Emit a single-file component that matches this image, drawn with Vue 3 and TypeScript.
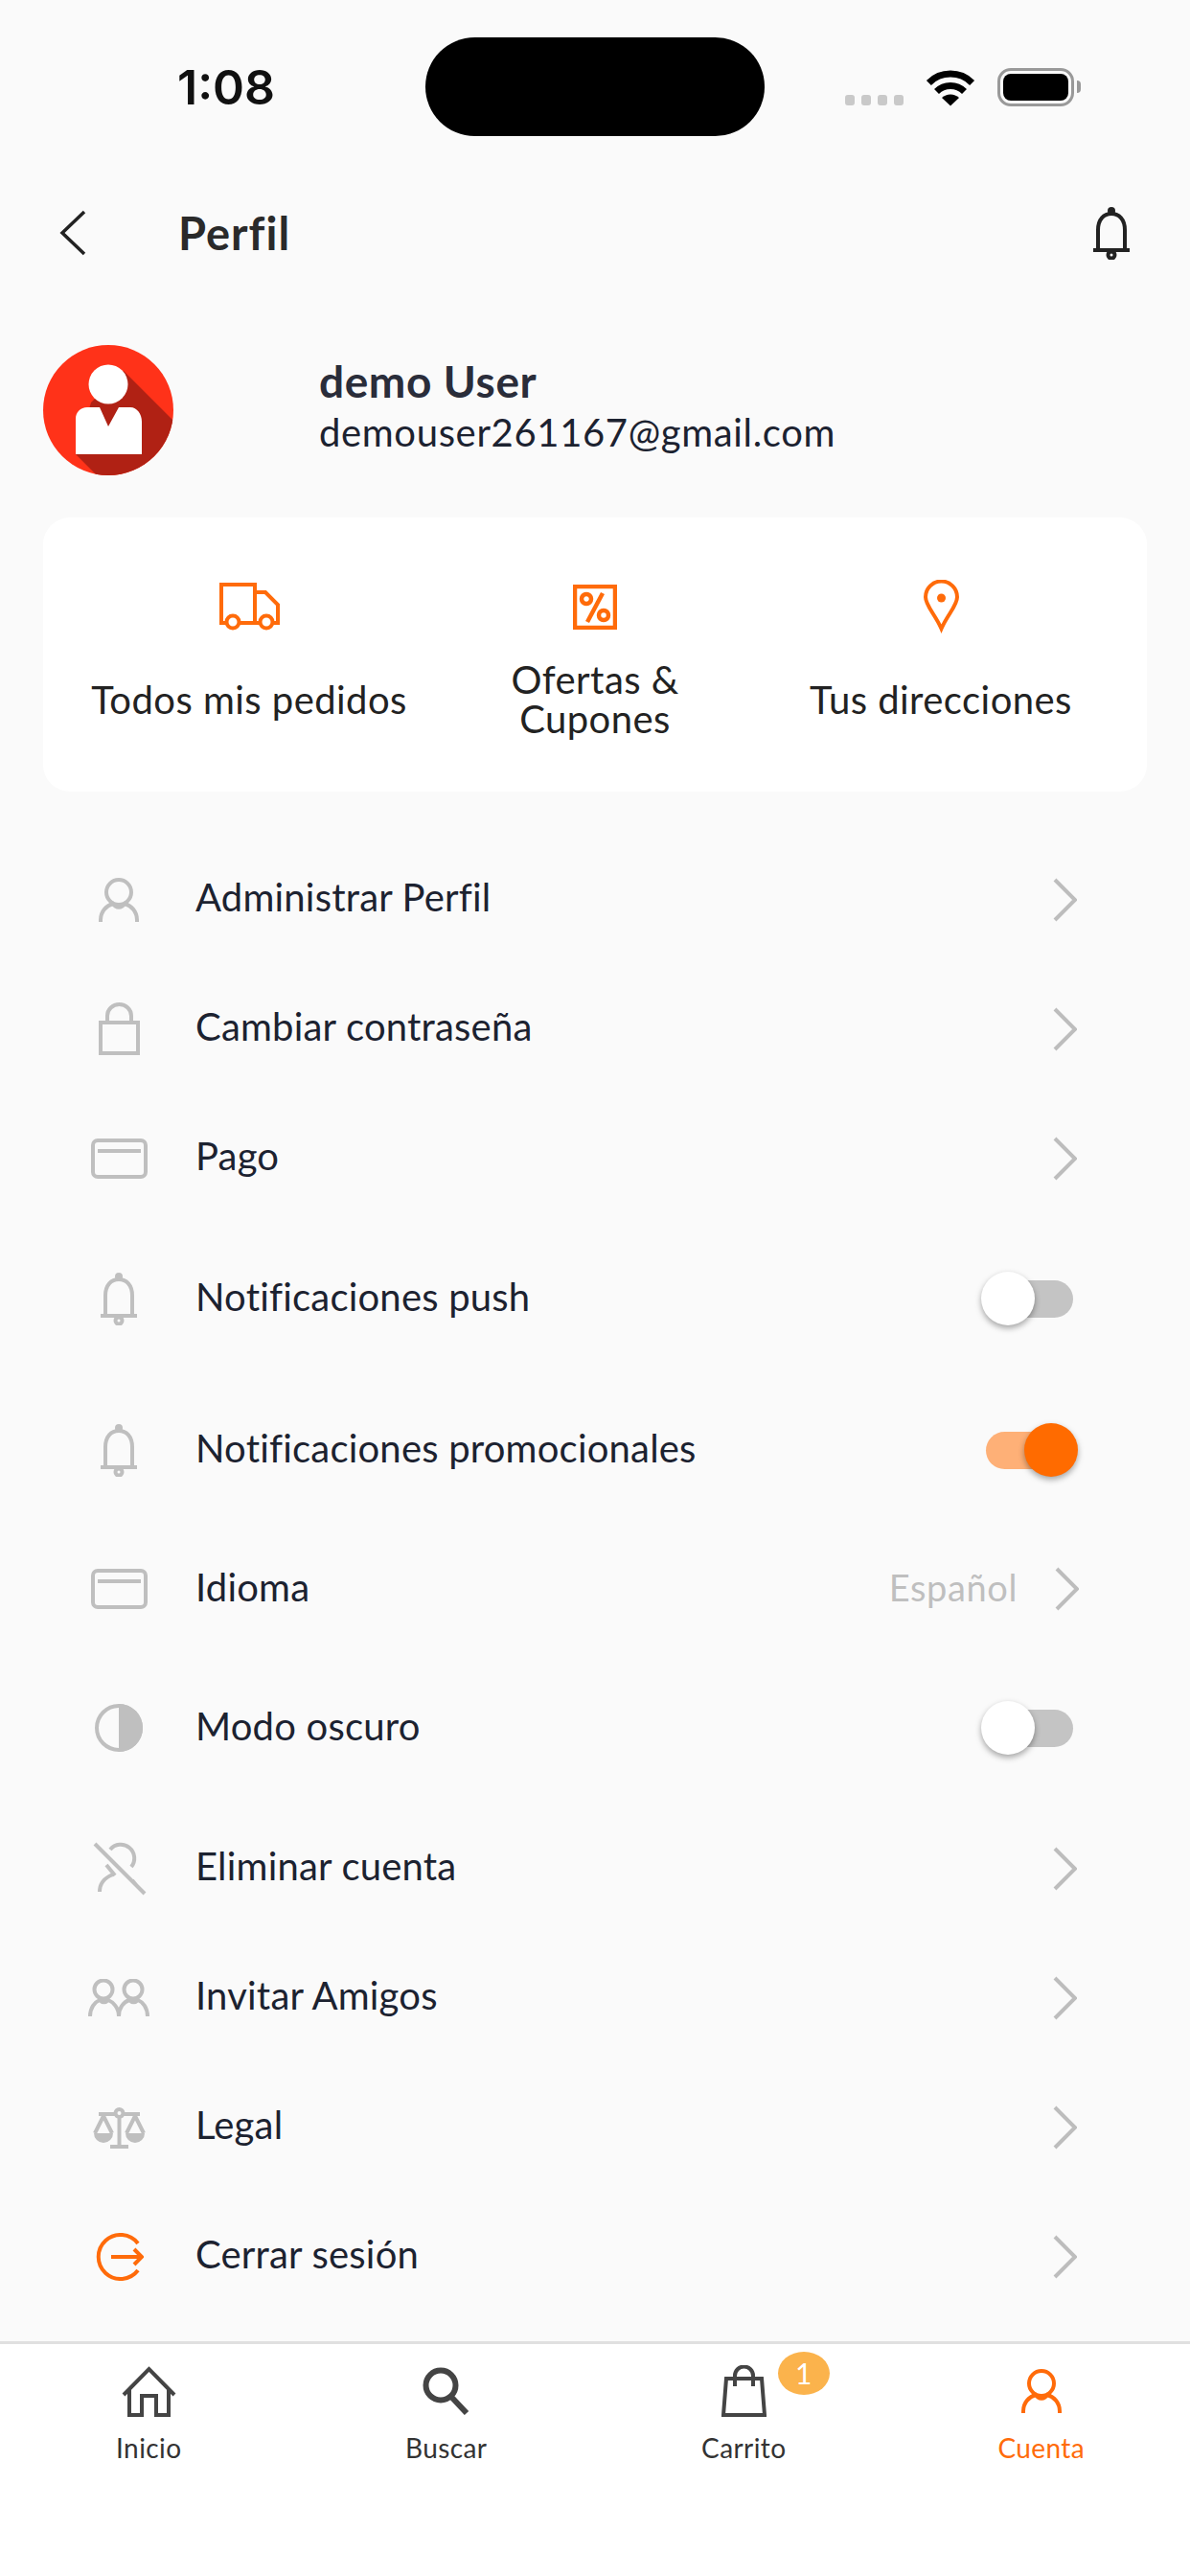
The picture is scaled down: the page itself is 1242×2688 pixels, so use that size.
<script setup lang="ts">
import { ref } from 'vue'

type Icon = { w: number; h: number; d: string; fill?: string; sw?: number }
type Row = { label: string; icon: string; kind?: 'toggle' | 'lang'; on?: boolean; value?: string; accent?: boolean }

const circle = (cx: number, cy: number, r: number) =>
  `M${cx - r} ${cy}a${r} ${r} 0 1 0 ${r * 2} 0a${r} ${r} 0 1 0 ${-r * 2} 0`

const bell = 'M7 45V25C7 14 13 8 21 8C29 8 35 14 35 25V45M2 46H40' + circle(21, 51, 3.5)

const icons: Record<string, Icon> = {
  truck: {
    w: 63, h: 50,
    d: 'M6 42H2V2H37V42M37 10H48L61 23V42H57M22 42H41' + circle(14, 41, 6.5) + circle(49, 41, 6.5),
  },
  percent: {
    w: 46, h: 47, sw: 4.5,
    d: 'M2 2H44V45H2ZM31 9L15 39' + circle(14, 15, 5) + circle(32, 32, 5),
  },
  pin: {
    w: 37, h: 56,
    d: 'M18.5 51C12 36 2 27 2 18A16.5 16.5 0 0 1 35 18C35 27 25 36 18.5 51Z',
    fill: circle(18.5, 19, 4.5),
  },
  person: {
    w: 42, h: 46,
    d: circle(21, 15, 13) + 'M2 46V44C2 35 8 29 15 27C18 32 24 32 27 27C34 29 40 35 40 44V46',
  },
  lock: { w: 43, h: 55, d: 'M2 21H41V53H2ZM9 21V14A12.5 12 0 0 1 34 14V21' },
  card: { w: 59, h: 42, d: 'M7 2H52A5 5 0 0 1 57 7V35A5 5 0 0 1 52 40H7A5 5 0 0 1 2 35V7A5 5 0 0 1 7 2ZM7 13H52' },
  bell: { w: 42, h: 56, d: bell, fill: circle(21, 5, 4) },
  half: { w: 50, h: 50, d: circle(25, 25, 23), fill: 'M25 0A25 25 0 0 1 25 50Z' },
  noperson: {
    w: 57, h: 57,
    d: 'M3 3L55 55M19 9A14 14 0 1 1 41 27M8 53C8 44 14 38 22 35M15 25L24 36M42 41L47 47',
  },
  friends: {
    w: 64, h: 39,
    d: circle(16, 11, 9.5) + circle(47, 11, 9.5) +
      'M2 39C2 30 7 24 12 22C15 25 18 25 21 22C26 24 32 30 32 39C32 30 37 24 43 22C46 25 49 25 52 22C57 24 62 30 62 39',
  },
  scale: {
    w: 55, h: 44,
    d: circle(27.5, 7, 4) + 'M6 8H23M32 8H49M27.5 11V42M18 42H37M11 10L2 28M11 10L20 28M44 10L35 28M44 10L53 28',
    fill: 'M1 28H21A10 10 0 0 1 1 28ZM34 28H54A10 10 0 0 1 34 28Z',
  },
  logout: { w: 51, h: 50, d: 'M45 11A23 23 0 1 0 45 39M17 25H48M41 17L49 25L41 33' },
  home: { w: 57, h: 53, d: 'M2 30L28.5 3L55 30M8 25V51H21V31H36V51H49V25' },
  search: { w: 49, h: 50, sw: 6, d: circle(19, 19, 15.5) + 'M30 31L46 48' },
  bag: { w: 47, h: 54, d: 'M5 14H42L45 52H2ZM14 22V11A9.5 9.5 0 0 1 33 11V22' },
}

const shortcuts = [
  { icon: 'truck', label: 'Todos mis pedidos' },
  { icon: 'percent', label: 'Ofertas & Cupones' },
  { icon: 'pin', label: 'Tus direcciones' },
]

const rows = ref<Row[]>([
  { label: 'Administrar Perfil', icon: 'person' },
  { label: 'Cambiar contraseña', icon: 'lock' },
  { label: 'Pago', icon: 'card' },
  { label: 'Notificaciones push', icon: 'bell', kind: 'toggle', on: false },
  { label: 'Notificaciones promocionales', icon: 'bell', kind: 'toggle', on: true },
  { label: 'Idioma', icon: 'card', kind: 'lang', value: 'Español' },
  { label: 'Modo oscuro', icon: 'half', kind: 'toggle', on: false },
  { label: 'Eliminar cuenta', icon: 'noperson' },
  { label: 'Invitar Amigos', icon: 'friends' },
  { label: 'Legal', icon: 'scale' },
  { label: 'Cerrar sesión', icon: 'logout', accent: true },
])

const tabs = [
  { label: 'Inicio', icon: 'home' },
  { label: 'Buscar', icon: 'search' },
  { label: 'Carrito', icon: 'bag', badge: 1 },
  { label: 'Cuenta', icon: 'person', active: true },
]
</script>

<template>
  <div class="screen">
    <div class="status">
      <span class="time">1:08</span>
      <div class="island"></div>
      <div class="status-icons">
        <div class="dots"><i></i><i></i><i></i><i></i></div>
        <svg width="54" height="40" viewBox="0 0 54 40" fill="none" stroke="#000" stroke-width="7">
          <path d="M4.4 15.4A32 32 0 0 1 49.6 15.4" />
          <path d="M12.5 24.5A20.5 20.5 0 0 1 41.5 24.5" />
          <path d="M27 39.5L18 31A13 13 0 0 1 36 31Z" fill="#000" stroke="none" />
        </svg>
        <div class="battery"><div class="battery-fill"></div></div>
      </div>
    </div>

    <header class="header">
      <button class="back" aria-label="Volver">
        <svg width="28" height="48" viewBox="0 0 28 48" fill="none" stroke="#222" stroke-width="3.5">
          <path d="M26 2L3 24L26 46" />
        </svg>
      </button>
      <h1 class="title">Perfil</h1>
      <svg class="header-bell" width="44" height="56" viewBox="0 0 42 56" fill="none" stroke="#222" stroke-width="4">
        <path :d="icons.bell.d" />
        <path :d="icons.bell.fill" fill="#222" stroke="none" />
      </svg>
    </header>

    <section class="profile">
      <svg class="avatar" width="136" height="136" viewBox="0 0 136 136">
        <defs>
          <clipPath id="avatar-clip"><circle cx="68" cy="68" r="68" /></clipPath>
        </defs>
        <circle cx="68" cy="68" r="68" fill="#ff3219" />
        <path d="M84 27L140 83V140H60L34 114L50 60Z" fill="#b02114" clip-path="url(#avatar-clip)" />
        <circle cx="68" cy="41" r="20.5" fill="#fff" />
        <path d="M46 65H59L68 85L79 65H91C98 65 103 72 103 80V114H34V77C34 70 39 65 46 65Z" fill="#fff" />
      </svg>
      <div class="who">
        <div class="name">demo User</div>
        <div class="email">demouser261167@gmail.com</div>
      </div>
    </section>

    <section class="shortcuts">
      <div v-for="s in shortcuts" :key="s.label" class="shortcut">
        <div class="shortcut-icon">
          <svg :width="icons[s.icon].w" :height="icons[s.icon].h" :viewBox="`0 0 ${icons[s.icon].w} ${icons[s.icon].h}`" fill="none" stroke="#ff6b0a" :stroke-width="icons[s.icon].sw ?? 4">
            <path :d="icons[s.icon].d" />
            <path v-if="icons[s.icon].fill" :d="icons[s.icon].fill" fill="#ff6b0a" stroke="none" />
          </svg>
        </div>
        <div class="shortcut-label">{{ s.label }}</div>
      </div>
    </section>

    <ul class="rows">
      <li v-for="r in rows" :key="r.label" class="row" :class="r.kind ? `row--${r.kind}` : ''">
        <span class="row-icon">
          <svg :width="icons[r.icon].w" :height="icons[r.icon].h" :viewBox="`0 0 ${icons[r.icon].w} ${icons[r.icon].h}`" fill="none" :stroke="r.accent ? '#ff6b0a' : '#bfbfbf'" stroke-width="4">
            <path :d="icons[r.icon].d" />
            <path v-if="icons[r.icon].fill" :d="icons[r.icon].fill" fill="#bfbfbf" stroke="none" />
          </svg>
        </span>
        <span class="row-label">{{ r.label }}</span>
        <span v-if="r.kind === 'toggle'" class="toggle" :class="{ on: r.on }"><i></i></span>
        <template v-else>
          <span v-if="r.value" class="row-value">{{ r.value }}</span>
          <svg class="chevron" width="26" height="46" viewBox="0 0 26 46" fill="none" stroke="#bdbdbd" stroke-width="4">
            <path d="M3 2L24 23L3 44" />
          </svg>
        </template>
      </li>
    </ul>

    <nav class="tabs">
      <div v-for="t in tabs" :key="t.label" class="tab" :class="{ active: t.active }">
        <div class="tab-icon">
          <svg :width="icons[t.icon].w" :height="icons[t.icon].h" :viewBox="`0 0 ${icons[t.icon].w} ${icons[t.icon].h}`" fill="none" :stroke="t.active ? '#ff6b0a' : '#444'" :stroke-width="icons[t.icon].sw ?? 4">
            <path :d="icons[t.icon].d" />
          </svg>
          <span v-if="t.badge" class="badge">{{ t.badge }}</span>
        </div>
        <div class="tab-label">{{ t.label }}</div>
      </div>
    </nav>
  </div>
</template>

<style scoped>
.screen {
  width: 1242px;
  height: 2688px;
  display: flex;
  flex-direction: column;
  background: #fafafa;
  font-family: Lato, "Noto Sans", sans-serif;
  color: #1c2230;
  overflow: hidden;
}

.status {
  position: relative;
  height: 193px;
  flex: none;
  display: flex;
  align-items: flex-start;
  justify-content: space-between;
  padding: 63px 121px 0 185px;
  box-sizing: border-box;
}

.time {
  font-family: Inter, sans-serif;
  font-size: 50px;
  line-height: 56px;
  font-weight: 600;
  color: #111;
}

.island {
  position: absolute;
  left: 444px;
  top: 39px;
  width: 354px;
  height: 103px;
  border-radius: 52px;
  background: #000;
}

.status-icons {
  display: flex;
  align-items: flex-end;
  margin-top: 8px;
}

.dots {
  display: flex;
  gap: 6.5px;
  margin: 0 22px 1px 0;
}

.dots i {
  width: 10.5px;
  height: 11px;
  border-radius: 3px;
  background: #c9c9c9;
}

.status-icons svg {
  margin-right: 22px;
}

.battery {
  position: relative;
  width: 80px;
  height: 40px;
  padding: 3px;
  box-sizing: border-box;
  border: 3px solid #999;
  border-radius: 14px;
}

.battery::after {
  content: "";
  position: absolute;
  right: -10px;
  top: 10px;
  width: 4px;
  height: 13px;
  border-radius: 0 4px 4px 0;
  background: #999;
}

.battery-fill {
  height: 100%;
  border-radius: 8px;
  background: #000;
}

.header {
  height: 100px;
  flex: none;
  display: flex;
  align-items: center;
  padding: 0 60px 0 62px;
}

.back {
  width: 124px;
  padding: 0;
  border: 0;
  background: none;
  text-align: left;
  line-height: 0;
}

.title {
  flex: 1;
  margin: 0;
  font-size: 47px;
  letter-spacing: 1px;
  font-weight: 700;
  font-variant-ligatures: none;
  color: #2a2a2a;
}

.profile {
  flex: none;
  display: flex;
  align-items: center;
  margin-top: 67px;
  padding-left: 45px;
}

.avatar {
  flex: none;
}

.who {
  margin: 0 0 8px 152px;
}

.name {
  font-size: 46px;
  letter-spacing: 0.6px;
  line-height: 54px;
  font-weight: 700;
  color: #2a2d3a;
}

.email {
  font-size: 40px;
  letter-spacing: 0.65px;
  line-height: 52px;
  color: #1c2230;
}

.shortcuts {
  flex: none;
  display: grid;
  grid-template-columns: repeat(3, 361px);
  justify-content: center;
  height: 286px;
  box-sizing: border-box;
  margin: 44px 45px 0;
  padding-top: 63px;
  border-radius: 28px;
  background: #fff;
}

.shortcut {
  display: flex;
  flex-direction: column;
  align-items: center;
}

.shortcut-icon {
  height: 60px;
  display: flex;
  align-items: center;
  justify-content: center;
}

.shortcut-label {
  width: 345px;
  height: 82px;
  margin-top: 26px;
  display: flex;
  align-items: center;
  justify-content: center;
  text-align: center;
  font-size: 40px;
  letter-spacing: 0.45px;
  line-height: 41px;
  color: #222;
}

.shortcut:nth-child(2) .shortcut-label {
  width: 240px;
}

.rows {
  flex: none;
  margin: 45px 0 0;
  padding: 0 118px 0 80px;
  list-style: none;
}

.row {
  height: 135px;
  display: flex;
  align-items: center;
}

.row--toggle {
  height: 158px;
}

.row--lang {
  height: 132px;
}

.row-icon {
  flex: none;
  width: 88px;
  display: flex;
  justify-content: center;
}

.row-label {
  flex: 1;
  margin: 0 0 5px 36px;
  font-size: 40px;
  letter-spacing: 0.2px;
  color: #1c2230;
}

.row-value {
  margin: 0 38px 5px 0;
  font-size: 38px;
  letter-spacing: 0.6px;
  color: #bfbfbf;
}

.chevron {
  flex: none;
}

.row--lang .chevron {
  margin-right: -2px;
}

.toggle {
  position: relative;
  width: 91px;
  height: 39px;
  margin-right: 4px;
  border-radius: 20px;
  background: #c4c4c4;
}

.toggle i {
  position: absolute;
  left: -5px;
  top: -9px;
  width: 56px;
  height: 56px;
  border-radius: 50%;
  background: #fff;
  box-shadow: 0 3px 6px rgba(0, 0, 0, 0.35);
}

.toggle.on {
  background: #feb077;
}

.toggle.on i {
  left: 40px;
  background: #ff6b00;
}

.tabs {
  flex: none;
  margin-top: auto;
  height: 245px;
  box-sizing: border-box;
  display: grid;
  grid-template-columns: repeat(4, 1fr);
  padding-top: 21px;
  border-top: 3px solid #e0e0e0;
  background: #fff;
}

.tab {
  display: flex;
  flex-direction: column;
  align-items: center;
}

.tab-icon {
  position: relative;
  height: 56px;
  display: flex;
  align-items: center;
  justify-content: center;
}

.tab-label {
  margin-top: 14px;
  font-size: 28px;
  letter-spacing: 0.4px;
  line-height: 34px;
  color: #333;
}

.tab.active .tab-label {
  color: #ff6b0a;
}

.badge {
  position: absolute;
  left: 59px;
  top: -13px;
  width: 54px;
  height: 45px;
  border-radius: 50%;
  background: #fbb34c;
  color: #fff;
  font-size: 30px;
  line-height: 45px;
  text-align: center;
}
</style>

<style>
html,
body {
  background: #fafafa;
}
</style>
